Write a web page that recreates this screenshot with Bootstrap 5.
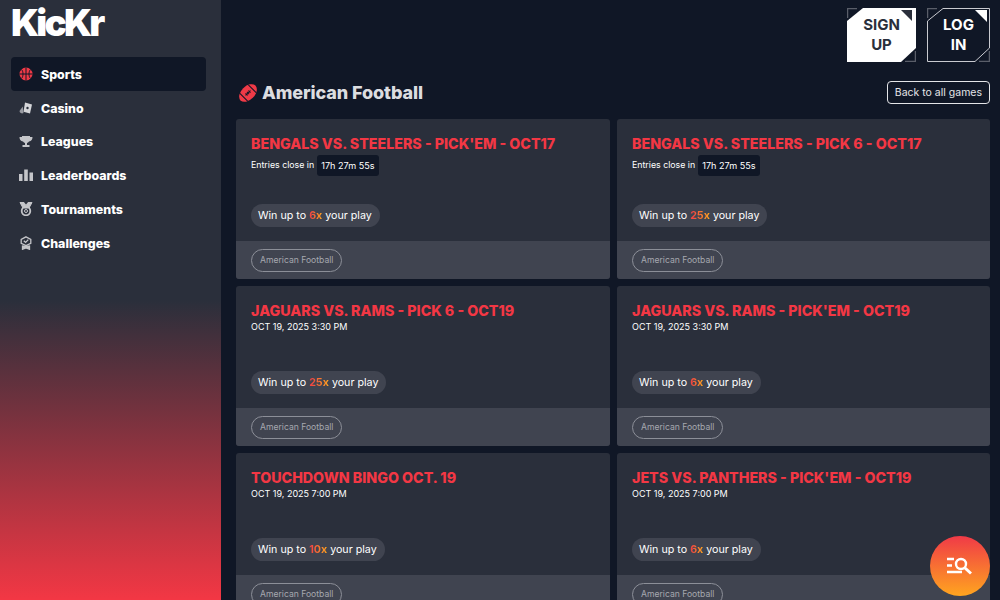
<!DOCTYPE html>
<html lang="en">
<head>
<meta charset="UTF-8">
<title>KicKr - American Football</title>
<link href="https://cdn.jsdelivr.net/npm/bootstrap@5.3.0/dist/css/bootstrap.min.css" rel="stylesheet">
<script src="https://cdn.jsdelivr.net/npm/bootstrap@5.3.0/dist/js/bootstrap.bundle.min.js"></script>
<style>
html, body { height: 100%; overflow: hidden; }
body { background: #101726; font-family: Inter, "Noto Sans", sans-serif; color: #fff; }
.shell { height: 600px; overflow: hidden; }
.side { width: 221px; flex: none; height: 600px; padding: 0 15px 0 11px; background: linear-gradient(180deg, #2a2f3b 0%, #2a2f3b 50%, #f33744 100%); }
.logo { font-size: 37px; font-weight: 900; line-height: 40px; letter-spacing: -2.800px; height: 57px; padding-top: 3px; }
.side-link { display: flex; align-items: center; gap: 8px; height: 34px; padding: 2px 0 0 8px; border-radius: 4px; color: #fff; font-size: 12.400px; font-weight: 800; text-decoration: none; margin-bottom: -.2px; }
.side-link.on { background: #101726; }
.side-link svg { width: 14px; height: 14px; flex: none; margin-top: -2px; }
.main-pane { flex: 1; min-width: 0; padding: 8px 10px 0 15px; }
.top-actions { height: 54px; display: flex; justify-content: flex-end; gap: 11px; }
.cut-btn { position: relative; width: 69px; height: 54px; padding: 0; border: 0; background: none; color: #fff; font-size: 15px; font-weight: 700; line-height: 20px; }
.cut-btn.login { width: 63px; }
.cut-btn svg { position: absolute; inset: 0; width: 100%; height: 100%; }
.cut-btn span { position: relative; display: block; }
.cut-btn.signup { color: #2a2f3b; }
.page-head { height: 57px; display: flex; align-items: center; justify-content: space-between; }
.page-head h1 { margin: 4px 0 0 0; font-size: 18px; font-weight: 800; color: #dcdde0; display: flex; align-items: center; gap: 4px; padding-left: 2px; letter-spacing: -.1px; }
.back-btn { border: 1px solid #e4e5e8; border-radius: 4px; color: #e4e5e8; font-size: 10.500px; padding: 0 7px; height: 23px; line-height: 21px; background: none; margin-top: 3px; }
.game-grid { display: grid; grid-template-columns: 374px 373px; gap: 7.500px 7px; }
.game-box { height: 159.500px; background: #2a2f3b; border-radius: 3px; display: flex; flex-direction: column; overflow: hidden; }
.game-top { flex: 1; padding: 15px 15px 14px; display: flex; flex-direction: column; align-items: flex-start; }
.game-top h2 { font-size: 14.250px; font-weight: 800; color: #f33744; margin: 0; line-height: 20px; white-space: nowrap; }
.when { font-size: 9px; line-height: 12px; }
.closes { display: flex; align-items: center; gap: 3px; font-size: 8.800px; height: 24px; margin-top: -1px; }
.clock { background: #101726; border-radius: 3px; padding: 0 4px; line-height: 21px; font-size: 9.100px; }
.win-pill { margin-top: auto; background: #404450; border-radius: 12px; height: 23px; line-height: 23px; padding: 0 8px 0 7px; font-size: 10.700px; color: #fff; }
.win-pill b { font-weight: 700; background: linear-gradient(90deg, #f03a47, #ffa51f); -webkit-background-clip: text; background-clip: text; color: transparent; }
.game-foot { height: 38px; background: #404450; padding: 1px 15px 0; display: flex; align-items: center; }
.sport-tag { border: 1px solid #8c8f98; border-radius: 12px; height: 23px; line-height: 21px; padding: 0 8px; font-size: 8.600px; color: #a6a8af; }
.search-fab { position: fixed; left: 930px; top: 536px; width: 60px; height: 60px; border-radius: 50%; border: 0; background: linear-gradient(180deg, #f03a47, #ffa51f); padding: 0; display: flex; align-items: center; justify-content: center; }
</style>
</head>
<body>
<div class="shell d-flex">
  <nav class="side">
    <div class="logo">KicKr</div>
    <a class="side-link on" href="#"><svg viewBox="0 0 14 14"><circle cx="7" cy="7" r="6.500" fill="#f03a47"/><path d="M.5 7h13M7 .5v13M2.500 2.500c2 2 2 7 0 9M11.500 2.500c-2 2-2 7 0 9" stroke="#101726" stroke-width="1" fill="none"/></svg>Sports</a>
    <a class="side-link" href="#"><svg viewBox="0 0 14 14"><path d="M6 1.500l7 2-2 9-6.500-1.800z" fill="#d5d6d9"/><path d="M3.800 5.500L.5 10l.5 1.500L3 12.500 4.500 12z" fill="#9a9ca3"/><circle cx="8.500" cy="7" r="1.200" fill="#2a2f3b"/></svg>Casino</a>
    <a class="side-link" href="#"><svg viewBox="0 0 14 14" fill="#c4c5c9"><path d="M3 1h8v1h2.500c0 2.500-1 4-3.500 4.500-.5.8-1.300 1.300-2 1.500v2h2.500v2h-7v-2H6V8c-.7-.2-1.500-.7-2-1.500C1.500 6 .5 4.500.5 2H3z"/></svg>Leagues</a>
    <a class="side-link" href="#"><svg viewBox="0 0 14 14" fill="#c4c5c9"><path d="M0 6h3.500v7H0zM5.200 1.500h3.600V13H5.200zM10.500 4.500H14V13h-3.500z"/></svg>Leaderboards</a>
    <a class="side-link" href="#"><svg viewBox="0 0 14 14" fill="none" stroke="#c4c5c9"><path d="M1 .5h4l2 3 2-3h4l-3 5.500H4z" fill="#c4c5c9"/><circle cx="7" cy="9" r="4.300" stroke-width="1.800"/><circle cx="7" cy="9" r="1.500"/></svg>Tournaments</a>
    <a class="side-link" href="#"><svg viewBox="0 0 14 14" fill="none" stroke="#c4c5c9" stroke-width="1.300"><path d="M7 .8l4.800 2.500v4L7 9.500 2.200 7.300v-4z"/><path d="M4.800 4.800L6.600 6.400 9.300 3.600"/><path d="M3.500 9.500V13.300L7 12l3.500 1.300V9.500" fill="#c4c5c9"/></svg>Challenges</a>
  </nav>
  <main class="main-pane">
    <div class="top-actions">
      <button class="cut-btn signup">
        <svg viewBox="0 0 69 54"><path d="M16 0H69V40L54 54H0V13z" fill="#fff"/><path d="M.6 10V.6H10" fill="none" stroke="#5a5e69" stroke-width="1.300"/><path d="M54 2H65V13z" fill="#2a2f3b"/><path d="M58 53.400H68.400V43" fill="none" stroke="#5a5e69" stroke-width="1.300"/></svg>
        <span>SIGN<br>UP</span>
      </button>
      <button class="cut-btn login">
        <svg viewBox="0 0 63 54"><path d="M16 .5H62.500V40L48 53.500H.5V13z" fill="#101726" stroke="#c9cad0"/><path d="M.6 10V.6H10" fill="none" stroke="#5a5e69" stroke-width="1.300"/><path d="M48 2H60V14z" fill="#fff"/><path d="M52 53.400H62.400V43" fill="none" stroke="#5a5e69" stroke-width="1.300"/></svg>
        <span>LOG<br>IN</span>
      </button>
    </div>
    <div class="page-head">
      <h1><svg width="20" height="20" viewBox="0 0 20 20"><g transform="rotate(-45 10 10)"><ellipse cx="10" cy="10" rx="10.500" ry="6.800" fill="#f03a47"/><path d="M6.500 10h7M8 8.500v3M10 8.500v3M12 8.500v3" stroke="#101726" stroke-width="1"/><path d="M4 4.500v11M16 4.500v11" stroke="#101726" stroke-width="1"/></g></svg>American Football</h1>
      <button class="back-btn">Back to all games</button>
    </div>
    <div class="game-grid">
      <div class="game-box">
        <div class="game-top">
          <h2>BENGALS VS. STEELERS - PICK'EM - OCT17</h2>
          <div class="closes"><span>Entries close in</span><span class="clock">17h 27m 55s</span></div>
          <span class="win-pill">Win up to <b>6x</b> your play</span>
        </div>
        <div class="game-foot"><span class="sport-tag">American Football</span></div>
      </div>
      <div class="game-box">
        <div class="game-top">
          <h2>BENGALS VS. STEELERS - PICK 6 - OCT17</h2>
          <div class="closes"><span>Entries close in</span><span class="clock">17h 27m 55s</span></div>
          <span class="win-pill">Win up to <b>25x</b> your play</span>
        </div>
        <div class="game-foot"><span class="sport-tag">American Football</span></div>
      </div>
      <div class="game-box">
        <div class="game-top">
          <h2>JAGUARS VS. RAMS - PICK 6 - OCT19</h2>
          <div class="when">OCT 19, 2025 3:30 PM</div>
          <span class="win-pill">Win up to <b>25x</b> your play</span>
        </div>
        <div class="game-foot"><span class="sport-tag">American Football</span></div>
      </div>
      <div class="game-box">
        <div class="game-top">
          <h2>JAGUARS VS. RAMS - PICK'EM - OCT19</h2>
          <div class="when">OCT 19, 2025 3:30 PM</div>
          <span class="win-pill">Win up to <b>6x</b> your play</span>
        </div>
        <div class="game-foot"><span class="sport-tag">American Football</span></div>
      </div>
      <div class="game-box">
        <div class="game-top">
          <h2>TOUCHDOWN BINGO OCT. 19</h2>
          <div class="when">OCT 19, 2025 7:00 PM</div>
          <span class="win-pill">Win up to <b>10x</b> your play</span>
        </div>
        <div class="game-foot"><span class="sport-tag">American Football</span></div>
      </div>
      <div class="game-box">
        <div class="game-top">
          <h2>JETS VS. PANTHERS - PICK'EM - OCT19</h2>
          <div class="when">OCT 19, 2025 7:00 PM</div>
          <span class="win-pill">Win up to <b>6x</b> your play</span>
        </div>
        <div class="game-foot"><span class="sport-tag">American Football</span></div>
      </div>
    </div>
  </main>
</div>
<button class="search-fab" aria-label="Search"><svg width="26" height="18" viewBox="0 0 26 18" fill="none" stroke="#fff" stroke-width="2.400"><path d="M0 2h7M0 8.500h5M0 15h15"/><circle cx="14" cy="7" r="5"/><path d="M18 11l6 5.500" stroke-width="3"/></svg></button>
</body>
</html>
